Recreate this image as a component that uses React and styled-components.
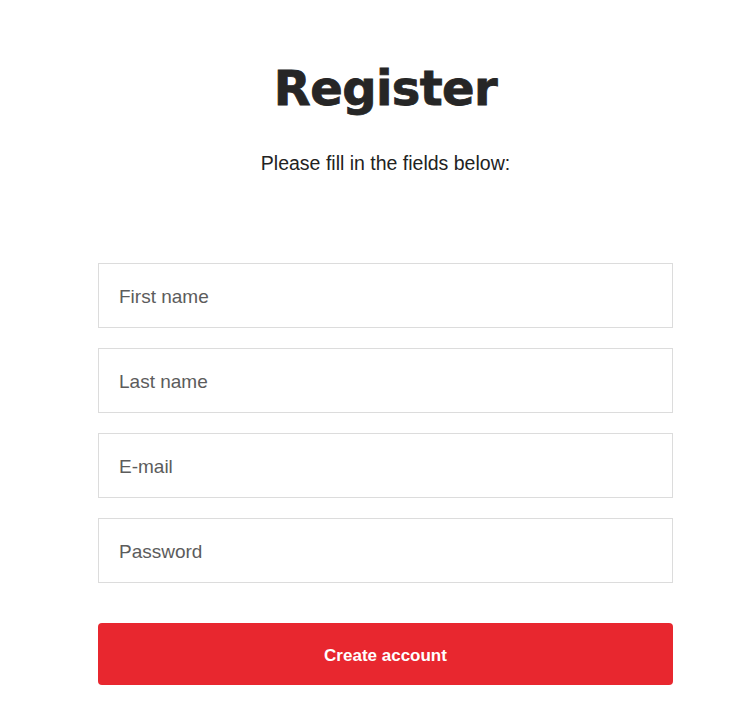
import React from "react";
import styled, { createGlobalStyle } from "styled-components";

const GlobalStyle = createGlobalStyle`
  body {
    margin: 0;
    background: #fff;
    font-family: "Liberation Sans", Arial, sans-serif;
    color: #222;
  }
`;

const Page = styled.div`
  padding: 52px 69px 40px 98px;
`;

const Header = styled.div`
  display: flex;
  flex-direction: column;
  align-items: center;
`;

const Title = styled.h1`
  margin: 0;
  font-family: "DejaVu Sans", "Liberation Sans", sans-serif;
  font-size: 48px;
  line-height: 72px;
  font-weight: 700;
  letter-spacing: -0.6px;
  color: #262626;
  -webkit-text-stroke: 0.8px #262626;
`;

const Subtitle = styled.p`
  margin: 28px 0 0;
  font-size: 19.5px;
  line-height: 22px;
  color: #222;
`;

const Form = styled.form`
  display: flex;
  flex-direction: column;
  gap: 20px;
  margin-top: 89px;
`;

const Input = styled.input`
  box-sizing: border-box;
  height: 65px;
  padding: 3px 20px 0;
  border: 1px solid #dcdcdc;
  border-radius: 0;
  font-family: "Liberation Sans", Arial, sans-serif;
  font-size: 19px;
  color: #222;
  outline: none;
  &::placeholder {
    color: #5c5c5c;
  }
`;

const Submit = styled.button`
  margin-top: 20px;
  height: 62px;
  padding: 3px 0 0;
  border: none;
  border-radius: 4px;
  background: #e8272f;
  color: #fff;
  font-family: "Liberation Sans", Arial, sans-serif;
  font-size: 17px;
  font-weight: 700;
  cursor: pointer;
`;

const fields = [
  { name: "firstName", type: "text", label: "First name" },
  { name: "lastName", type: "text", label: "Last name" },
  { name: "email", type: "email", label: "E-mail" },
  { name: "password", type: "password", label: "Password" },
];

const App = () => {
  return (
    <>
      <GlobalStyle />
      <Page>
        <Header>
          <Title>Register</Title>
          <Subtitle>Please fill in the fields below:</Subtitle>
        </Header>
        <Form onSubmit={(e) => e.preventDefault()}>
          {fields.map((f) => (
            <Input key={f.name} name={f.name} type={f.type} placeholder={f.label} />
          ))}
          <Submit type="submit">Create account</Submit>
        </Form>
      </Page>
    </>
  );
};

export default App;
